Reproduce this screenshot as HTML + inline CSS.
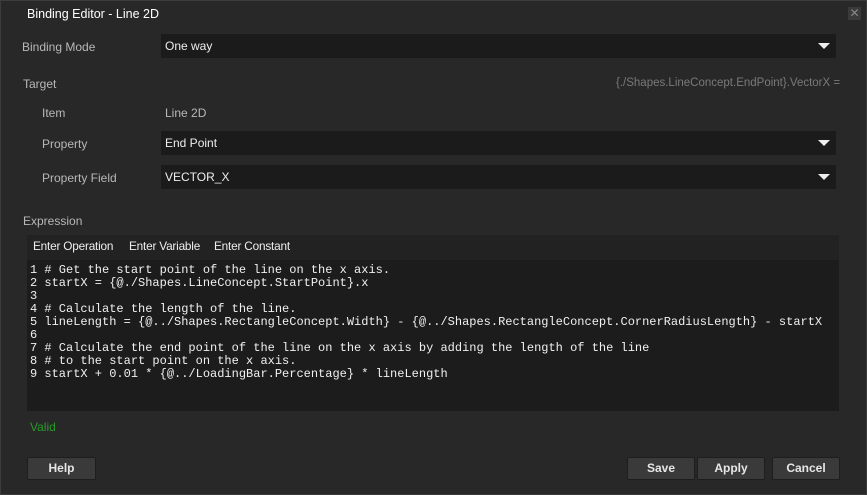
<!DOCTYPE html>
<html><head><style>
body{margin:0;width:867px;height:495px;background:#282828;font-family:"Liberation Sans",sans-serif;font-size:12px;color:#ddd;position:relative;overflow:hidden}
.a{position:absolute;white-space:pre}
.frame{position:absolute;left:0;top:0;width:865px;height:493px;border:1px solid #3c3c3c}
.lbl{color:#b8b8b8}
.dd{position:absolute;left:161px;width:675px;height:24px;background:#1b1b1b;color:#eee}
.dd span{position:absolute;left:4px;top:5px}
.dd i{position:absolute;right:6px;top:9px;width:0;height:0;border-left:6px solid transparent;border-right:6px solid transparent;border-top:6px solid #eee}
.btn{position:absolute;top:457px;height:21px;background:#3a3a3a;border:1px solid #1e1e1e;border-radius:2px;color:#e6e6e6;font-weight:bold;text-align:center;line-height:21px}
.code{position:absolute;left:30px;top:264px;font-family:"Liberation Mono",monospace;font-size:12px;line-height:13px;color:#f0f0f0;white-space:pre}
.tb{position:absolute;top:239px;color:#eee;font-size:11.8px;letter-spacing:-0.2px;white-space:pre}
</style></head><body>
<div class="frame"></div>
<div class="a" style="left:27px;top:7px;color:#fff;font-size:12.5px">Binding Editor - Line 2D</div>
<div class="a" style="left:848px;top:7px;width:13px;height:13px;background:#3a3a3a;color:#888;font-size:12px;line-height:13px;text-align:center">✕</div>
<div class="a lbl" style="left:22px;top:40px">Binding Mode</div>
<div class="dd" style="top:34px"><span>One way</span><i></i></div>
<div class="a lbl" style="left:23px;top:77px">Target</div>
<div class="a" style="left:616px;top:77px;color:#7a7a7a;font-size:11.5px">{./Shapes.LineConcept.EndPoint}.VectorX =</div>
<div class="a lbl" style="left:42px;top:106px">Item</div>
<div class="a lbl" style="left:165px;top:106px">Line 2D</div>
<div class="a lbl" style="left:42px;top:137px">Property</div>
<div class="dd" style="top:131px"><span>End Point</span><i></i></div>
<div class="a lbl" style="left:42px;top:171px">Property Field</div>
<div class="dd" style="top:165px"><span>VECTOR_X</span><i></i></div>
<div class="a lbl" style="left:23px;top:214px">Expression</div>
<div class="a" style="left:27px;top:235px;width:812px;height:176px;background:#1c1c1c"></div>
<div class="a" style="left:27px;top:235px;width:812px;height:25px;background:#222"></div>
<div class="tb" style="left:33px">Enter Operation</div>
<div class="tb" style="left:129px">Enter Variable</div>
<div class="tb" style="left:214px">Enter Constant</div>
<div class="code">1 # Get the start point of the line on the x axis.
2 startX = {@./Shapes.LineConcept.StartPoint}.x
3
4 # Calculate the length of the line.
5 lineLength = {@../Shapes.RectangleConcept.Width} - {@../Shapes.RectangleConcept.CornerRadiusLength} - startX
6
7 # Calculate the end point of the line on the x axis by adding the length of the line
8 # to the start point on the x axis.
9 startX + 0.01 * {@../LoadingBar.Percentage} * lineLength</div>
<div class="a" style="left:30px;top:420px;color:#2a9a2a">Valid</div>
<div class="btn" style="left:27px;width:67px">Help</div>
<div class="btn" style="left:627px;width:66px">Save</div>
<div class="btn" style="left:697px;width:66px">Apply</div>
<div class="btn" style="left:772px;width:66px">Cancel</div>
</body></html>
